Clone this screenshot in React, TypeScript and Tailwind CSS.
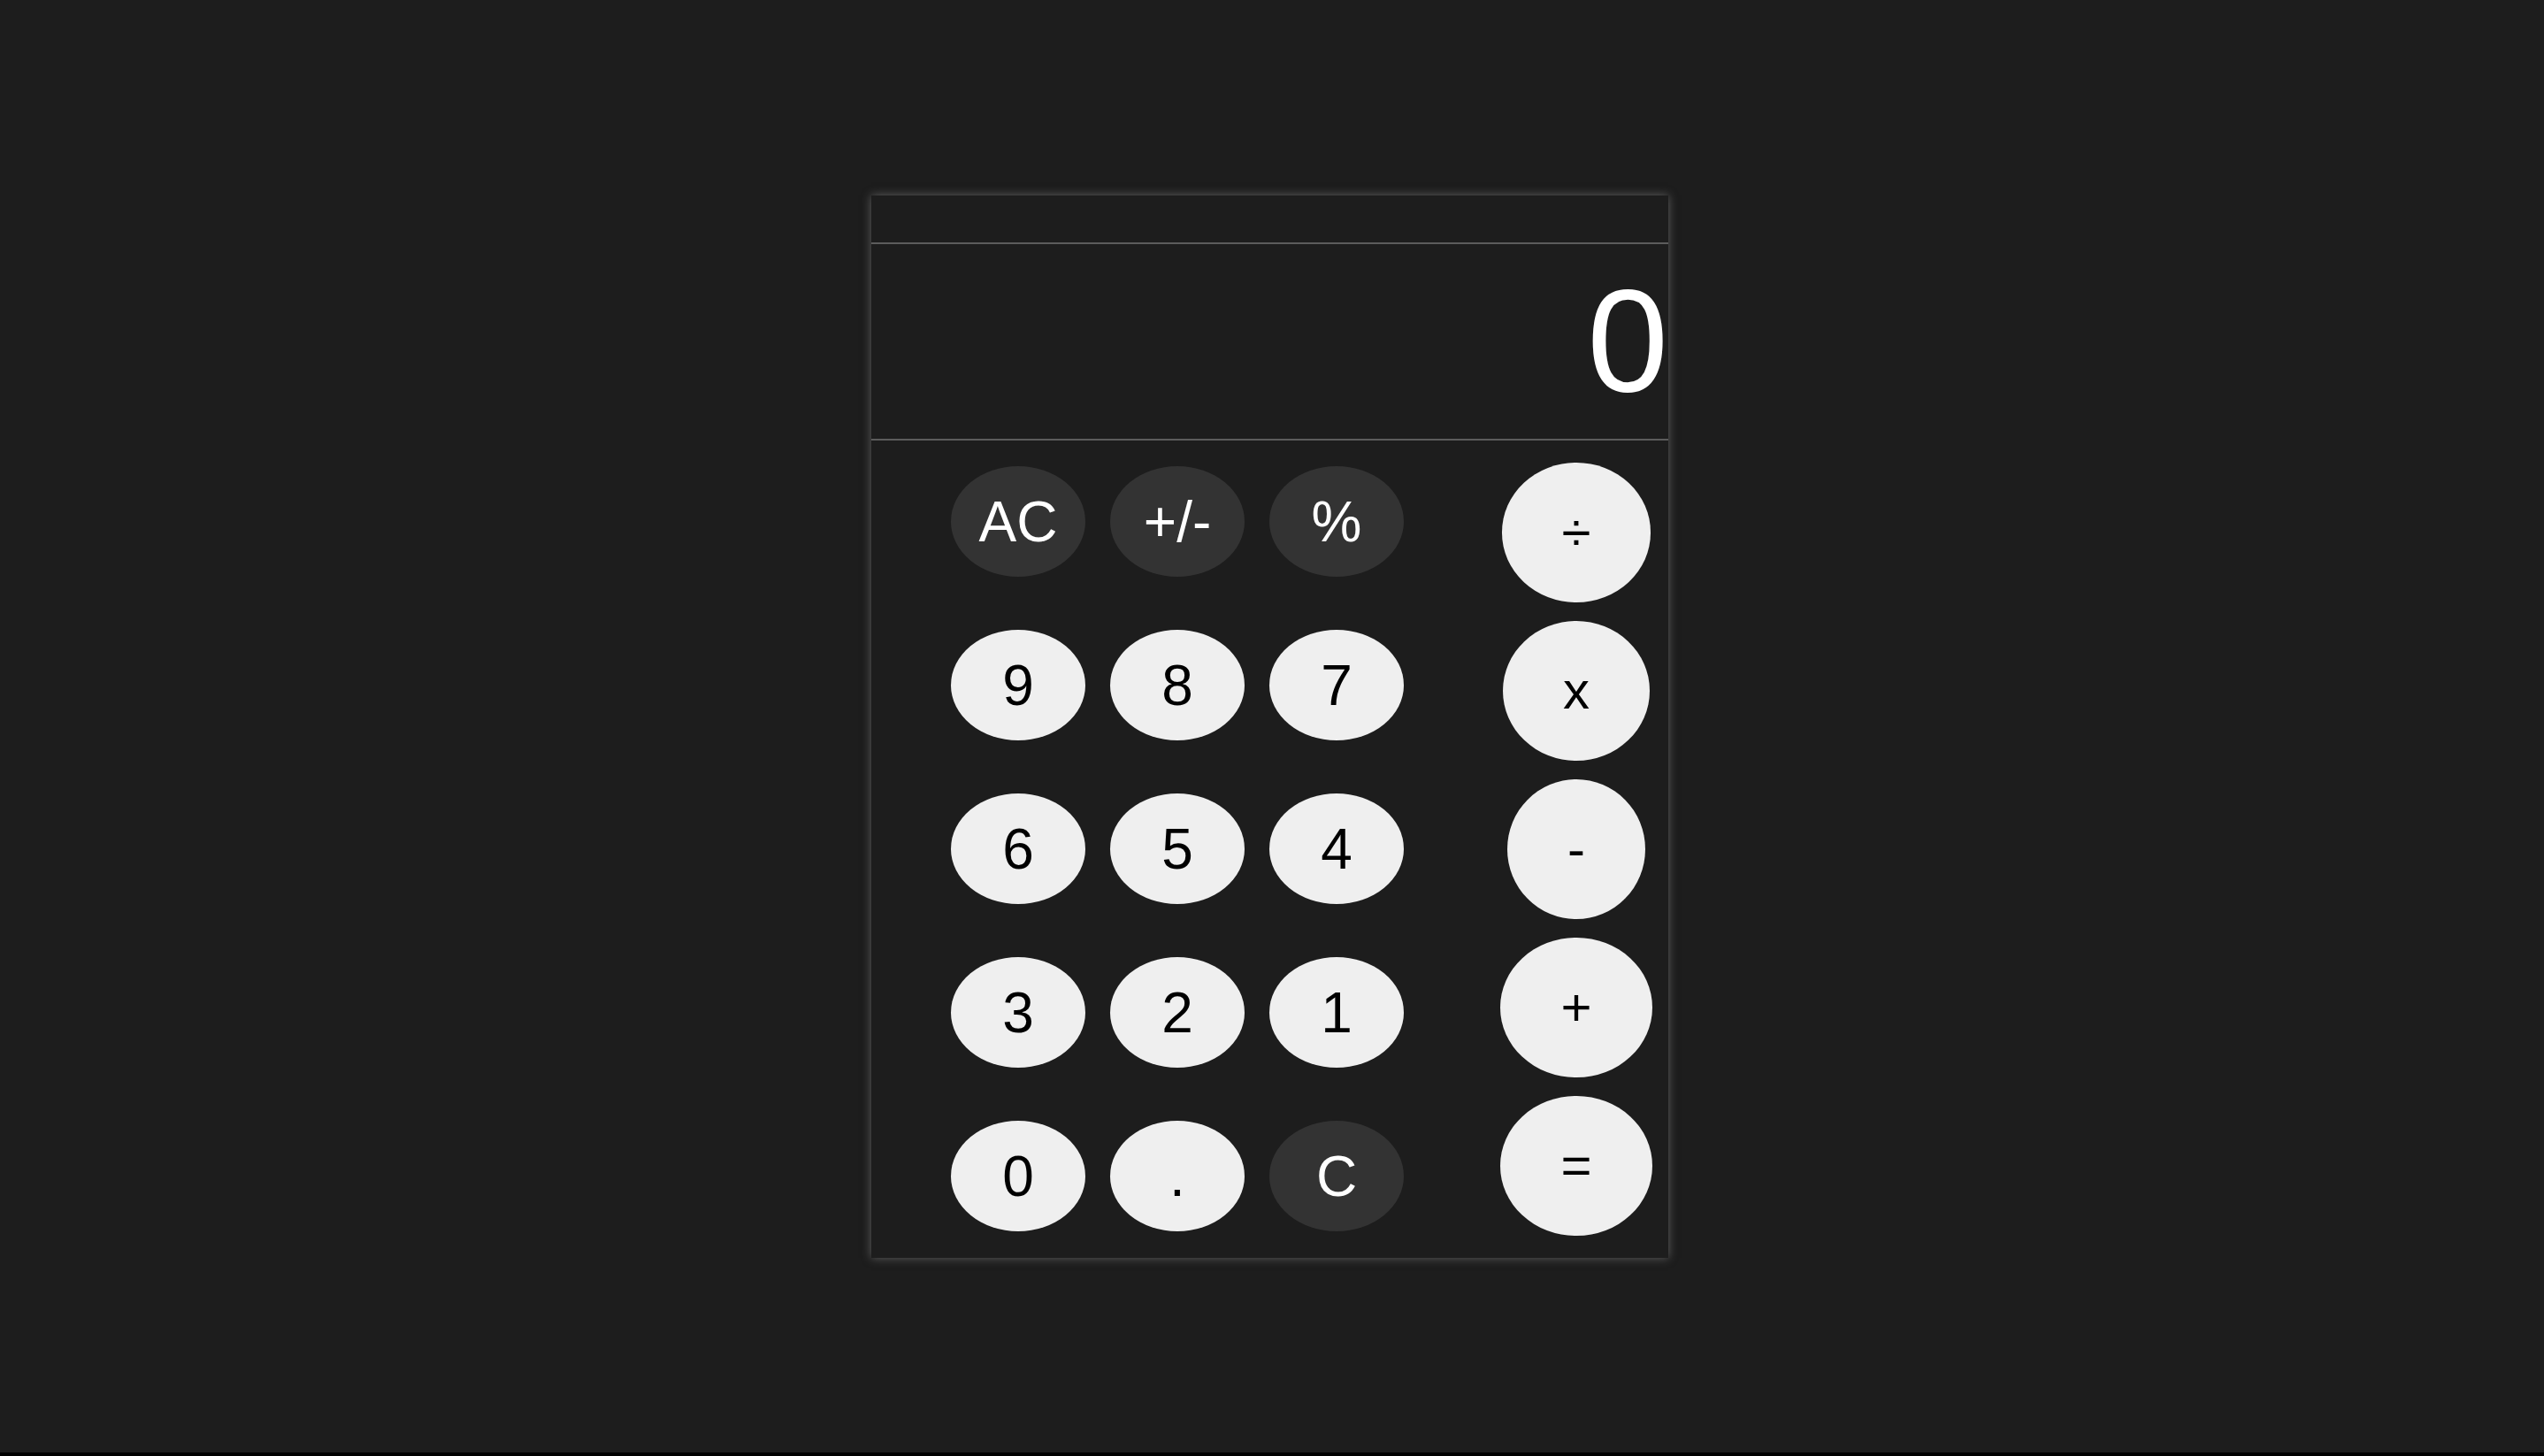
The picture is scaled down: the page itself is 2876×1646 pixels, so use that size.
const numberKeys: { label: string; dark?: boolean }[] = [
  { label: "AC", dark: true },
  { label: "+/-", dark: true },
  { label: "%", dark: true },
  { label: "9" },
  { label: "8" },
  { label: "7" },
  { label: "6" },
  { label: "5" },
  { label: "4" },
  { label: "3" },
  { label: "2" },
  { label: "1" },
  { label: "0" },
  { label: "." },
  { label: "C", dark: true },
];

const opKeys = ["÷", "x", "-", "+", "="];

export default function App() {
  return (
    <div className="min-h-[1646px] bg-black">
      <div
        className="w-full h-[1642px] bg-[#1d1d1d] flex items-center justify-center pr-[5px]"
        style={{ fontFamily: '"Liberation Sans", Arial, sans-serif' }}
      >
        <div className="w-[901px] h-[1201px] bg-[#1d1d1d] flex flex-col shadow-[0_0_10px_rgba(140,140,140,0.6)]">
          {/* header */}
          <div className="h-[53px] shrink-0" />
          <div className="h-[2px] bg-[#5c5c5c] shrink-0" />

          {/* display */}
          <div className="h-[220px] shrink-0 flex items-center justify-end overflow-hidden">
            <span className="text-[165px] text-white leading-normal">0</span>
          </div>
          <div className="h-[2px] bg-[#5c5c5c] shrink-0" />

          {/* keypad */}
          <div className="flex-1 flex items-center pl-[90px]">
            <div className="grid grid-cols-[152px_152px_152px] gap-x-[28px] gap-y-[60px]">
              {numberKeys.map((k) => (
                <button
                  key={k.label}
                  className={
                    "w-[152px] h-[125px] rounded-[50%] flex items-center justify-center text-[64px] leading-normal " +
                    (k.dark ? "bg-[#333333] text-white" : "bg-[#efefef] text-black")
                  }
                >
                  {k.label}
                </button>
              ))}
            </div>
            <div className="ml-[109px] w-[172px] flex flex-col items-center gap-[21px]">
              {opKeys.map((op) => (
                <button
                  key={op}
                  className="h-[158px] px-[68px] rounded-[50%] bg-[#efefef] text-black text-[60px] leading-normal flex items-center justify-center"
                >
                  {op}
                </button>
              ))}
            </div>
          </div>
        </div>
      </div>
    </div>
  );
}
